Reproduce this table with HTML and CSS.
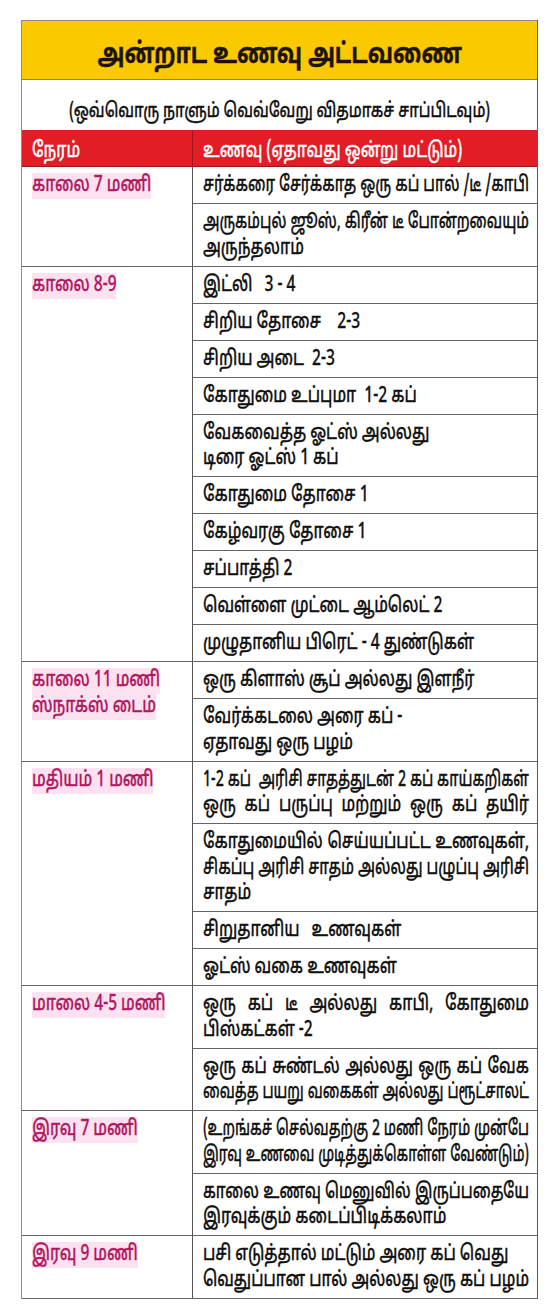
FILE: index.html
```html
<!DOCTYPE html>
<html lang="ta">
<head>
<meta charset="utf-8">
<title>அன்றாட உணவு அட்டவணை</title>
<link rel="stylesheet" href="styles.css">
<script src="fit.js" defer></script>
</head>
<body>
<div class="sheet">
  <div class="title"><span class="title-text">அன்றாட உணவு அட்டவணை</span></div>
  <div class="subtitle"><span class="subtitle-text">(ஒவ்வொரு நாளும் வெவ்வேறு விதமாகச் சாப்பிடவும்)</span></div>
  <div class="diet">
    <div class="hd time"><span class="ln">நேரம்</span></div>
    <div class="hd food"><span class="ln">உணவு (ஏதாவது ஒன்று மட்டும்)</span></div>

    <div class="cell time span2"><span class="ln"><span class="hl">காலை 7 மணி</span></span></div>
    <div class="cell food"><span class="ln fill">சர்க்கரை சேர்க்காத ஒரு கப் பால் /டீ /காபி</span></div>
    <div class="cell food"><span class="ln fill">அருகம்புல் ஜூஸ், கிரீன் டீ போன்றவையும்</span><span class="ln">அருந்தலாம்</span></div>

    <div class="cell time span10"><span class="ln"><span class="hl">காலை 8-9</span></span></div>
    <div class="cell food"><span class="ln">இட்லி &nbsp; 3 - 4</span></div>
    <div class="cell food"><span class="ln">சிறிய தோசை &nbsp;&nbsp; 2-3</span></div>
    <div class="cell food"><span class="ln">சிறிய அடை &nbsp;2-3</span></div>
    <div class="cell food"><span class="ln">கோதுமை உப்புமா &nbsp;1-2 கப்</span></div>
    <div class="cell food"><span class="ln">வேகவைத்த ஓட்ஸ் அல்லது</span><span class="ln">டிரை ஓட்ஸ் 1 கப்</span></div>
    <div class="cell food"><span class="ln">கோதுமை தோசை 1</span></div>
    <div class="cell food"><span class="ln">கேழ்வரகு தோசை 1</span></div>
    <div class="cell food"><span class="ln">சப்பாத்தி 2</span></div>
    <div class="cell food"><span class="ln">வெள்ளை முட்டை ஆம்லெட் 2</span></div>
    <div class="cell food"><span class="ln">முழுதானிய பிரெட் - 4 துண்டுகள்</span></div>

    <div class="cell time span2"><span class="ln"><span class="hl">காலை 11 மணி</span></span><span class="ln"><span class="hl">ஸ்நாக்ஸ் டைம்</span></span></div>
    <div class="cell food"><span class="ln">ஒரு கிளாஸ் சூப் அல்லது இளநீர்</span></div>
    <div class="cell food"><span class="ln">வேர்க்கடலை அரை கப் -</span><span class="ln">ஏதாவது ஒரு பழம்</span></div>

    <div class="cell time span4"><span class="ln"><span class="hl">மதியம் 1 மணி</span></span></div>
    <div class="cell food"><span class="ln fill">1-2 கப் &nbsp;அரிசி சாதத்துடன் 2 கப் காய்கறிகள்</span><span class="ln fill">ஒரு கப் பருப்பு மற்றும் ஒரு கப் தயிர்</span></div>
    <div class="cell food"><span class="ln fill">கோதுமையில் செய்யப்பட்ட உணவுகள்,</span><span class="ln fill">சிகப்பு அரிசி சாதம் அல்லது பழுப்பு அரிசி</span><span class="ln">சாதம்</span></div>
    <div class="cell food"><span class="ln">சிறுதானிய &nbsp; உணவுகள்</span></div>
    <div class="cell food"><span class="ln">ஓட்ஸ் வகை உணவுகள்</span></div>

    <div class="cell time span2"><span class="ln"><span class="hl">மாலை 4-5 மணி</span></span></div>
    <div class="cell food"><span class="ln fill">ஒரு கப் டீ அல்லது காபி, கோதுமை</span><span class="ln">பிஸ்கட்கள் -2</span></div>
    <div class="cell food"><span class="ln fill">ஒரு கப் சுண்டல் அல்லது ஒரு கப் வேக</span><span class="ln fill">வைத்த பயறு வகைகள் அல்லது ப்ரூட்சாலட்</span></div>

    <div class="cell time span2"><span class="ln"><span class="hl">இரவு 7 மணி</span></span></div>
    <div class="cell food"><span class="ln fill">(உறங்கச் செல்வதற்கு 2 மணி நேரம் முன்பே</span><span class="ln fill">இரவு உணவை முடித்துக்கொள்ள வேண்டும்)</span></div>
    <div class="cell food"><span class="ln fill">காலை உணவு மெனுவில் இருப்பதையே</span><span class="ln">இரவுக்கும் கடைப்பிடிக்கலாம்</span></div>

    <div class="cell time"><span class="ln"><span class="hl">இரவு 9 மணி</span></span></div>
    <div class="cell food"><span class="ln">பசி எடுத்தால் மட்டும் அரை கப் வெது</span><span class="ln fill">வெதுப்பான பால் அல்லது ஒரு கப் பழம்</span></div>
  </div>
</div>
</body>
</html>
```

FILE: fit.js
```js
// Squeeze full-width (justified) lines that are naturally wider than their cell.
document.querySelectorAll('.ln.fill').forEach(function (line) {
  var cell = line.parentElement;
  var cs = getComputedStyle(cell);
  var avail = cell.clientWidth - parseFloat(cs.paddingLeft) - parseFloat(cs.paddingRight);
  var base = parseFloat(getComputedStyle(line).getPropertyValue('--squeeze')) || 0.74;
  line.style.width = 'max-content';
  var natural = line.getBoundingClientRect().width / base;
  line.style.width = '';
  var fit = Math.min(base, (avail - 1) / natural);
  line.style.setProperty('--squeeze', fit.toFixed(4));
});
```

FILE: styles.css
```css
html, body {
  margin: 0;
  padding: 0;
  background: #ffffff;
}

body {
  font-family: "Noto Sans Tamil", "Noto Sans", sans-serif;
  color: #111111;
}

.sheet {
  width: 515px;
  margin: 20px 0 0 21px;
  border: 1px solid #8c8c8c;
  border-right-color: #5a5a5a;
  border-bottom: none;
}

/* ---------- title ---------- */
.title {
  height: 59px;
  background: #fbc900;
  border-bottom: 1px solid #9a8430;
  display: flex;
  align-items: center;
  justify-content: center;
  padding-top: 12px;
  box-sizing: border-box;
}

.title-text {
  display: inline-block;
  white-space: nowrap;
  font-size: 28px;
  font-weight: 700;
  color: #1e1405;
  -webkit-text-stroke: 0.4px #1e1405;
  transform: scaleX(0.79);
}

.subtitle {
  height: 50px;
  display: flex;
  align-items: center;
  justify-content: center;
  padding-top: 13px;
  box-sizing: border-box;
}

.subtitle-text {
  display: inline-block;
  white-space: nowrap;
  font-size: 20px;
  font-weight: 500;
  color: #111111;
  -webkit-text-stroke: 0.3px currentColor;
  transform: scaleX(0.735);
}

/* ---------- table grid ---------- */
.diet {
  display: grid;
  grid-template-columns: 170px 345px;
}

.hd {
  background: #e21d25;
  color: #ffffff;
  height: 37px;
  box-sizing: border-box;
  padding: 9px 8px 0 10px;
  font-size: 21px;
  font-weight: 500;
  line-height: 26px;
  -webkit-text-stroke: 0.3px currentColor;
  border-bottom: 1px solid #a31218;
}

.hd.food {
  border-left: 1px solid #a31218;
}

.cell {
  padding: 7px 8px 3.5px 10px;
  font-size: 21px;
  font-weight: 500;
  line-height: 25.5px;
  -webkit-text-stroke: 0.3px currentColor;
  border-bottom: 1px solid #666666;
}

.time {
  grid-column: 1;
  color: #b0195f;
}

.hd.time {
  color: #ffffff;
}

.food {
  grid-column: 2;
  border-left: 1px solid #555555;
}

.span2 { grid-row: span 2; }
.span4 { grid-row: span 4; }
.span10 { grid-row: span 10; }

.hl {
  background: #fce2f0;
}

/* condensed line: laid out wide, drawn narrow */
.ln {
  --squeeze: 0.74;
  display: block;
  white-space: nowrap;
  width: calc(100% / var(--squeeze));
  transform: scaleX(var(--squeeze));
  transform-origin: 0 0;
}

.ln.fill {
  text-align: justify;
  text-align-last: justify;
}
```
